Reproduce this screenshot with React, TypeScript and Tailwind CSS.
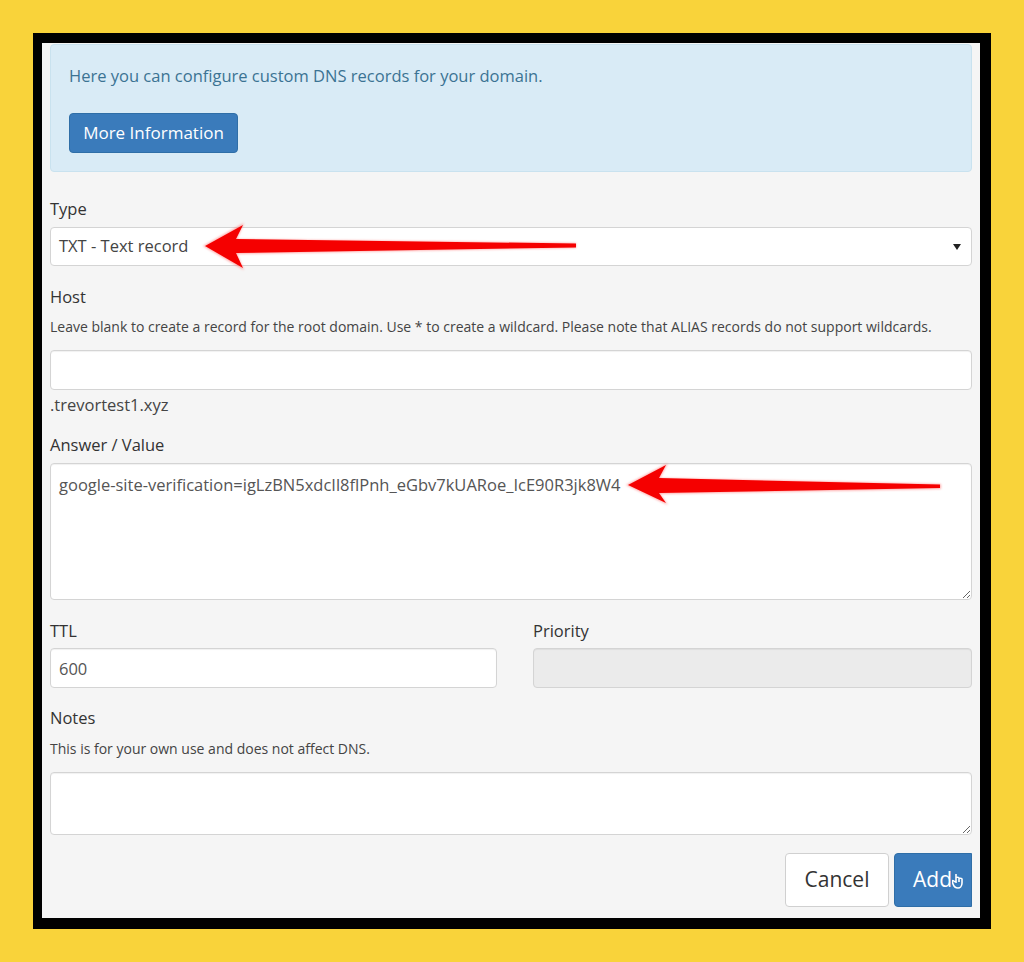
import React from 'react';

const labelCls = "block text-[16.5px] leading-[22px] text-[#333]";
const helpCls = "text-[14px] leading-[18px] text-[#444]";
const inputCls =
  "block w-full rounded-[4px] border border-[#d4d4d4] px-[8px] text-[16.5px] text-[#555] shadow-[inset_0_1px_1px_rgba(0,0,0,0.06)] outline-none";

const Arrows: React.FC = () => (
  <svg
    className="pointer-events-none absolute left-0 top-0"
    width="1024"
    height="962"
    viewBox="0 0 1024 962"
  >
    <defs>
      <filter id="glow" x="-10%" y="-50%" width="120%" height="200%">
        <feGaussianBlur stdDeviation="1.2" />
      </filter>
    </defs>
    {/* Type arrow */}
    <polygon
      points="203,246 244,223 237,239 576,243 576,248 237,254 244,270"
      fill="#ff5a5a"
      opacity="0.5"
      filter="url(#glow)"
    />
    <polygon points="205,246 243,225 236,239 576,243.5 576,247.5 236,253 243,268" fill="#f50000" />
    {/* Value arrow */}
    <polygon
      points="626,485 668,463 660,478 941,484 941,489 660,494 668,505"
      fill="#ff5a5a"
      opacity="0.5"
      filter="url(#glow)"
    />
    <polygon points="628,485 666,465 659,478 940,484.5 940,488 659,493 666,503" fill="#f50000" />
  </svg>
);

const App: React.FC = () => {
  return (
    <div
      className="relative h-[962px] w-[1024px] overflow-hidden bg-[#f9d33a] pl-[33px] pt-[33px]"
      style={{ fontFamily: '"Open Sans", "Liberation Sans", sans-serif' }}
    >
      <div className="h-[896px] w-[958px] border-b-[11px] border-l-[9px] border-r-[11px] border-t-[10px] border-black bg-black">
        <div className="h-full w-full overflow-hidden bg-[#f5f5f5] px-[8px] pt-[1px]">
          {/* info box */}
          <div className="h-[128px] rounded-[4px] border border-[#c9e2ef] bg-[#d9ebf6] pl-[18px] pt-[20px]">
            <p className="text-[16.5px] leading-[22px] text-[#3b7393]">
              Here you can configure custom DNS records for your domain.
            </p>
            <button className="mt-[26px] h-[40px] w-[169px] rounded-[4px] border border-[#2f6ea7] bg-[#3a7bbb] text-[17px] text-white">
              More Information
            </button>
          </div>

          {/* Type */}
          <label className={`${labelCls} mt-[26px]`}>Type</label>
          <div className="relative mt-[7px] flex h-[39px] items-center rounded-[4px] border border-[#d4d4d4] bg-white px-[8px] text-[16.5px] text-[#444]">
            TXT - Text record
            <span className="absolute right-[10px] top-[16px] h-0 w-0 border-l-[4.5px] border-r-[4.5px] border-t-[6px] border-l-transparent border-r-transparent border-t-[#222]" />
          </div>

          {/* Host */}
          <label className={`${labelCls} mt-[20px]`}>Host</label>
          <p className={`${helpCls} mt-[10px]`}>
            Leave blank to create a record for the root domain. Use * to create a wildcard. Please note that ALIAS records do not support wildcards.
          </p>
          <input className={`${inputCls} mt-[14px] h-[40px] bg-white`} defaultValue="" />
          <p className="mt-[4px] text-[16.5px] leading-[22px] text-[#444]">.trevortest1.xyz</p>

          {/* Answer */}
          <label className={`${labelCls} mt-[18px]`}>Answer / Value</label>
          <textarea
            className={`${inputCls} mt-[7px] h-[137px] resize-y bg-white py-[10px] leading-[22px]`}
            defaultValue="google-site-verification=igLzBN5xdcIl8flPnh_eGbv7kUARoe_IcE90R3jk8W4"
          />

          {/* TTL / Priority */}
          <div className="mt-[20px] grid grid-cols-[447px_1fr] gap-x-[36px]">
            <div>
              <label className={labelCls}>TTL</label>
              <input className={`${inputCls} mt-[6px] h-[40px] bg-white`} defaultValue="600" />
            </div>
            <div>
              <label className={labelCls}>Priority</label>
              <input
                className={`${inputCls} mt-[6px] h-[40px] bg-[#ebebeb]`}
                disabled
                defaultValue=""
              />
            </div>
          </div>

          {/* Notes */}
          <label className={`${labelCls} mt-[19px]`}>Notes</label>
          <p className={`${helpCls} mt-[11px]`}>This is for your own use and does not affect DNS.</p>
          <textarea className={`${inputCls} mt-[14px] h-[63px] resize-y bg-white`} defaultValue="" />

          {/* Buttons */}
          <div className="mt-[18px] flex justify-end gap-[5px]">
            <button className="h-[54px] w-[104px] rounded-[4px] border border-[#d0d0d0] bg-white text-[21px] text-[#333]">
              Cancel
            </button>
            <button className="relative h-[54px] w-[78px] rounded-l-[4px] border border-[#2f6ea7] bg-[#3a7bbb] pl-[18px] text-left text-[21px] text-white">
              Add
              <svg
                className="absolute left-[57px] top-[18px]"
                width="14"
                height="18"
                viewBox="0 0 14 18"
                fill="none"
                stroke="white"
                strokeWidth="1.6"
              >
                <path d="M4 2v9M4 6c0-1 3-1 3 0v4M7 7c0-1 3-1 3 0v4c0 3-2 5-4 5s-4-1-5-4l-1-3c1-1 2 0 3 1" />
              </svg>
            </button>
          </div>
        </div>
      </div>
      <Arrows />
    </div>
  );
};

export default App;
